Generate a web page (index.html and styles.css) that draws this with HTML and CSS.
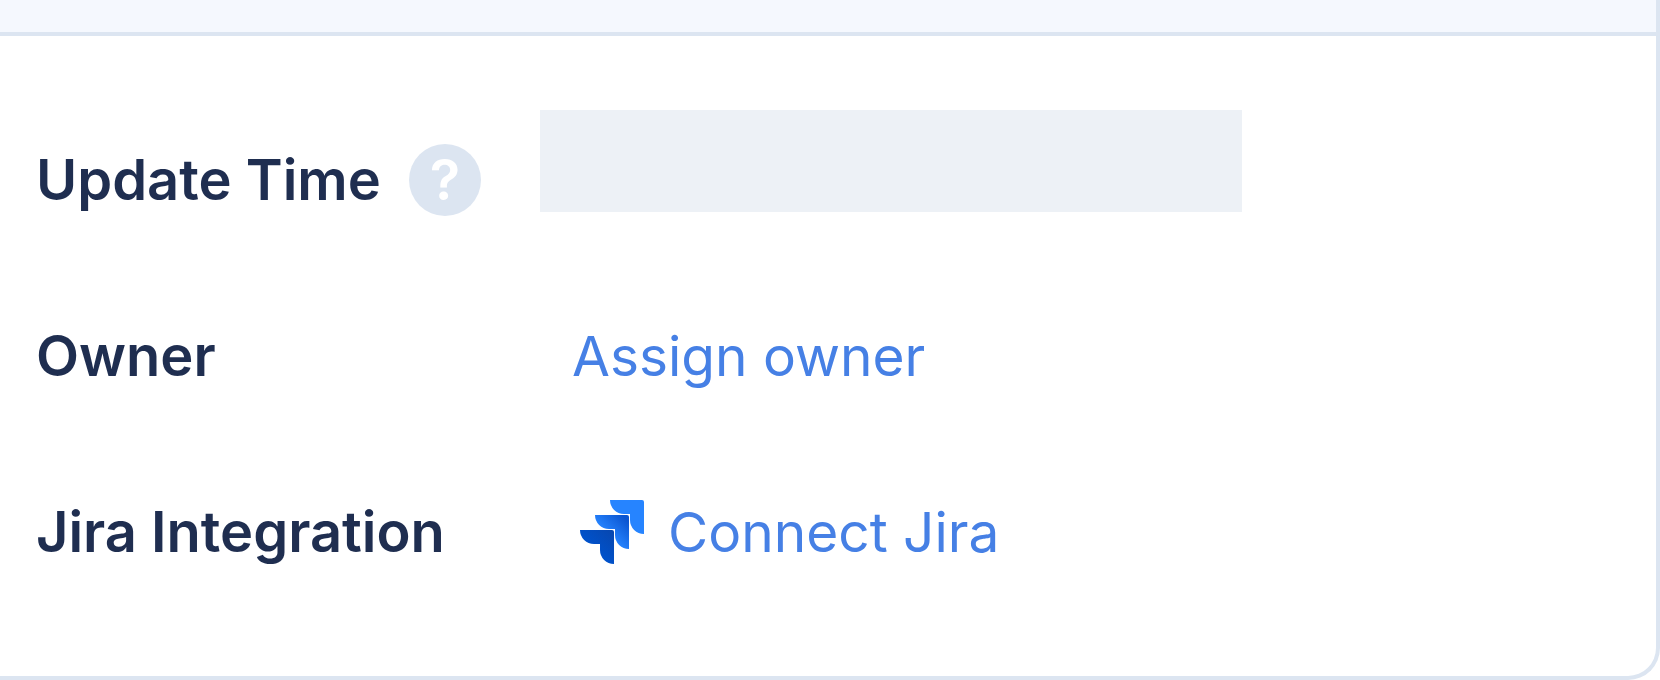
FILE: index.html
```html
<!DOCTYPE html>
<html lang="en">
<head>
    <meta charset="UTF-8">
    <meta name="viewport" content="width=device-width, initial-scale=1.0">
    <title>Details</title>
    <link rel="stylesheet" href="styles.css">
</head>
<body>
    <div class="card">
        <div class="card-header"></div>

        <dl class="details">
            <!-- Update time, value still loading -->
            <div class="row">
                <dt class="label">
                    Update Time
                    <button type="button" class="help" aria-label="Help">?</button>
                </dt>
                <dd class="value value-loading">
                    <div class="skeleton"></div>
                </dd>
            </div>

            <!-- Owner -->
            <div class="row">
                <dt class="label">Owner</dt>
                <dd class="value">
                    <a href="#" class="action">Assign owner</a>
                </dd>
            </div>

            <!-- Jira -->
            <div class="row">
                <dt class="label">Jira Integration</dt>
                <dd class="value">
                    <a href="#" class="action">
                        <svg class="jira-icon" viewBox="-2 0 76 64" aria-hidden="true">
                            <defs>
                                <linearGradient id="jira-mid" x1="0.95" y1="0.05" x2="0.4" y2="0.6">
                                    <stop offset="0.1" stop-color="#0b55d0"/>
                                    <stop offset="1" stop-color="#2684ff"/>
                                </linearGradient>
                                <linearGradient id="jira-low" x1="0.95" y1="0.05" x2="0.4" y2="0.6">
                                    <stop offset="0" stop-color="#0747b0"/>
                                    <stop offset="1" stop-color="#0052cc"/>
                                </linearGradient>
                            </defs>
                            <path fill="#2684ff" d="M36 0a14 14 0 0 0 14 14h6v6a14 14 0 0 0 14 14V2a2 2 0 0 0-2-2z"/>
                            <path fill="url(#jira-mid)" stroke="#fff" stroke-width="2" paint-order="stroke" d="M21 15a14 14 0 0 0 14 14h6v6a14 14 0 0 0 14 14V17a2 2 0 0 0-2-2z"/>
                            <path fill="url(#jira-low)" stroke="#fff" stroke-width="2" paint-order="stroke" d="M6 30a14 14 0 0 0 14 14h6v6a14 14 0 0 0 14 14V32a2 2 0 0 0-2-2z"/>
                        </svg>
                        Connect Jira
                    </a>
                </dd>
            </div>
        </dl>
    </div>
</body>
</html>
```
FILE: styles.css
```css
body {
    margin: 0;
    background: #fff;
    color: #1f2e50;
    font-family: Inter, "Liberation Sans", sans-serif;
    font-size: 55px;
    line-height: 72px;
}

.card {
    border-right: 4px solid #dce5f1;
    border-bottom: 4px solid #dce5f1;
    border-bottom-right-radius: 32px;
    overflow: hidden;
}

.card-header {
    height: 32px;
    background: #f5f8fe;
    border-bottom: 4px solid #dce5f1;
}

.details {
    margin: 0;
    padding: 56px 36px;
}

.row {
    display: grid;
    grid-template-columns: 504px 1fr;
    align-items: center;
    min-height: 176px;
}

.label {
    display: flex;
    align-items: center;
    gap: 28px;
    font-size: 56px;
    font-weight: 600;
    white-space: nowrap;
}

.help {
    width: 72px;
    height: 72px;
    padding: 0;
    border: none;
    border-radius: 50%;
    background: #dce5f1;
    color: #fff;
    font: inherit;
    cursor: pointer;
}

.value {
    display: flex;
    margin: 0;
    padding-left: 32px;
}

.value-loading {
    align-self: start;
    padding: 18px 0 0;
}

.skeleton {
    width: 65%;
    max-width: 702px;
    height: 102px;
    background: #edf1f6;
}

.action {
    display: flex;
    align-items: center;
    gap: 20px;
    color: #4680e5;
    text-decoration: none;
    white-space: nowrap;
}

.action:hover {
    text-decoration: underline;
}

.jira-icon {
    width: 76px;
    height: 64px;
}
```
